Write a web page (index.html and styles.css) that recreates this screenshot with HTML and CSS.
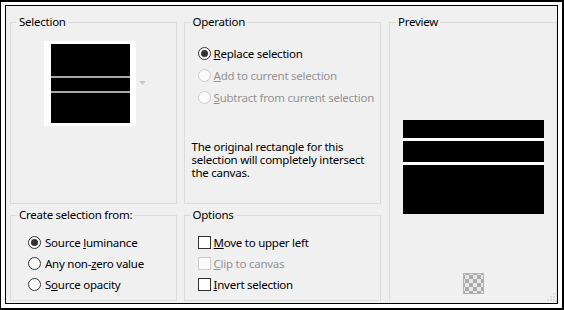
FILE: index.html
```html
<!DOCTYPE html>
<html>
<head>
<meta charset="utf-8">
<link rel="stylesheet" href="styles.css">
</head>
<body>
<div class="outer">
  <div class="inner">
    <div class="col col-left">
      <fieldset class="group sel">
        <legend>Selection</legend>
        <div class="thumb-row">
          <div class="thumb"><div class="thumb-img"></div></div>
          <svg class="drop" width="7" height="4" viewBox="0 0 7 4"><path d="M0 0h7L3.5 4z" fill="#c8c8c8"/></svg>
        </div>
      </fieldset>
      <fieldset class="group create">
        <legend>Create selection from:</legend>
        <div class="list">
          <div class="opt"><span class="radio on"></span><span>Source <u>l</u>uminance</span></div>
          <div class="opt"><span class="radio"></span><span>Any non-<u>z</u>ero value</span></div>
          <div class="opt"><span class="radio"></span><span>S<u>o</u>urce opacity</span></div>
        </div>
      </fieldset>
    </div>
    <div class="col col-mid">
      <fieldset class="group op">
        <legend>Operation</legend>
        <div class="list">
          <div class="opt wide"><span class="radio on"></span><span><u>R</u>eplace selection</span></div>
          <div class="opt wide dis"><span class="radio"></span><span><u>A</u>dd to current selection</span></div>
          <div class="opt wide dis"><span class="radio"></span><span><u>S</u>ubtract from current selection</span></div>
        </div>
        <p class="note">The original rectangle for this selection will completely intersect the canvas.</p>
      </fieldset>
      <fieldset class="group options">
        <legend>Options</legend>
        <div class="list">
          <div class="opt"><span class="check"></span><span><u>M</u>ove to upper left</span></div>
          <div class="opt dis"><span class="check"></span><span><u>C</u>lip to canvas</span></div>
          <div class="opt"><span class="check"></span><span><u>I</u>nvert selection</span></div>
        </div>
      </fieldset>
    </div>
    <fieldset class="group preview">
      <legend>Preview</legend>
      <div class="preview-body">
        <div class="preview-img"></div>
        <div class="checker"></div>
      </div>
    </fieldset>
    <svg class="grip" width="8" height="8" viewBox="0 0 8 8">
      <rect x="6" y="0" width="2" height="2" fill="#dadada"/>
      <rect x="3" y="3" width="2" height="2" fill="#dadada"/>
      <rect x="6" y="3" width="2" height="2" fill="#dadada"/>
      <rect x="0" y="6" width="2" height="2" fill="#dadada"/>
      <rect x="3" y="6" width="2" height="2" fill="#dadada"/>
      <rect x="6" y="6" width="2" height="2" fill="#dadada"/>
    </svg>
  </div>
</div>
</body>
</html>
```
FILE: styles.css
```css
html, body {
  margin: 0;
  padding: 0;
  background: #fff;
}
body {
  font-family: "Noto Sans", "Open Sans", sans-serif;
  font-size: 11.5px;
  letter-spacing: -0.25px;
  color: #000;
}
.outer {
  width: 564px;
  height: 310px;
  box-sizing: border-box;
  border: solid #000;
  border-width: 2px 2px 2px 1px;
  padding: 3px 4px 4px 4px;
  background: #fff;
}
.inner {
  position: relative;
  height: 100%;
  box-sizing: border-box;
  border: 1px solid #000;
  background: #f0f0f0;
  overflow: hidden;
  display: flex;
  align-items: flex-start;
  padding: 8px 0 0 4px;
}
.col {
  display: flex;
  flex-direction: column;
  gap: 3px;
}
.col-left { width: 167px; }
.col-mid { width: 198px; margin-left: 7px; }
.group {
  margin: 0;
  padding: 0;
  border: 1px solid #dcdcdc;
  min-width: 0;
  box-sizing: border-box;
}
.group legend {
  margin-left: 6px;
  padding: 0 2px;
  line-height: 16px;
  height: 16px;
  color: #000;
}
.sel, .op { height: 190px; }
.create, .options { height: 94px; }
.thumb-row {
  display: flex;
  align-items: center;
  margin: 11px 0 0 33px;
}
.thumb {
  background: #fff;
  padding: 3px 6px 3px 7px;
}
.thumb-img {
  width: 79px;
  height: 79px;
  background: linear-gradient(to bottom, #000 0 32px, #a8a8a8 32px 34px, #000 34px 47px, #a8a8a8 47px 49px, #000 49px);
}
.drop { margin-left: 3px; margin-top: -1px; }
.opt {
  display: flex;
  align-items: center;
  height: 21px;
  white-space: nowrap;
}
.opt.wide { height: 22px; }
.create .list { margin: 9px 0 0 17px; }
.op .list { margin: 12px 0 0 13px; }
.options .list { margin: 9px 0 0 13px; }
.create .opt { gap: 4px; }
.op .opt, .options .opt { gap: 3px; }
.radio {
  width: 13px;
  height: 13px;
  box-sizing: border-box;
  border: 1px solid #333;
  border-radius: 50%;
  background: #fff;
  display: flex;
  align-items: center;
  justify-content: center;
  flex: none;
}
.radio.on::after {
  content: "";
  width: 7px;
  height: 7px;
  border-radius: 50%;
  background: #333;
}
.check {
  width: 13px;
  height: 13px;
  box-sizing: border-box;
  border: 1px solid #333;
  background: #fff;
  flex: none;
}
.dis { color: #939393; }
.dis .radio, .dis .check {
  border-color: #cccccc;
  background: #fbfbfb;
}
.note {
  margin: 32px 0 0 7px;
  line-height: 13px;
  width: 180px;
}
.preview {
  width: 168px;
  height: 300px;
  margin-left: 8px;
  flex: none;
}
.preview-body {
  display: flex;
  flex-direction: column;
  align-items: center;
}
.preview-img {
  margin-top: 90px;
  width: 141px;
  height: 94px;
  background: linear-gradient(to bottom, #000 0 18px, #fff 18px 21px, #000 21px 42px, #fff 42px 45px, #000 45px);
}
.checker {
  margin-top: 59px;
  width: 21px;
  height: 21px;
  box-sizing: border-box;
  border: 1px solid #b4b4b4;
  background-color: #e8e8e8;
  background-image: conic-gradient(#a9a9a9 0 25%, transparent 0 50%, #a9a9a9 0 75%, transparent 0);
  background-size: 8px 8px;
  background-position: 1px 1px;
}
.grip {
  position: absolute;
  right: 2px;
  bottom: 2px;
}
```
